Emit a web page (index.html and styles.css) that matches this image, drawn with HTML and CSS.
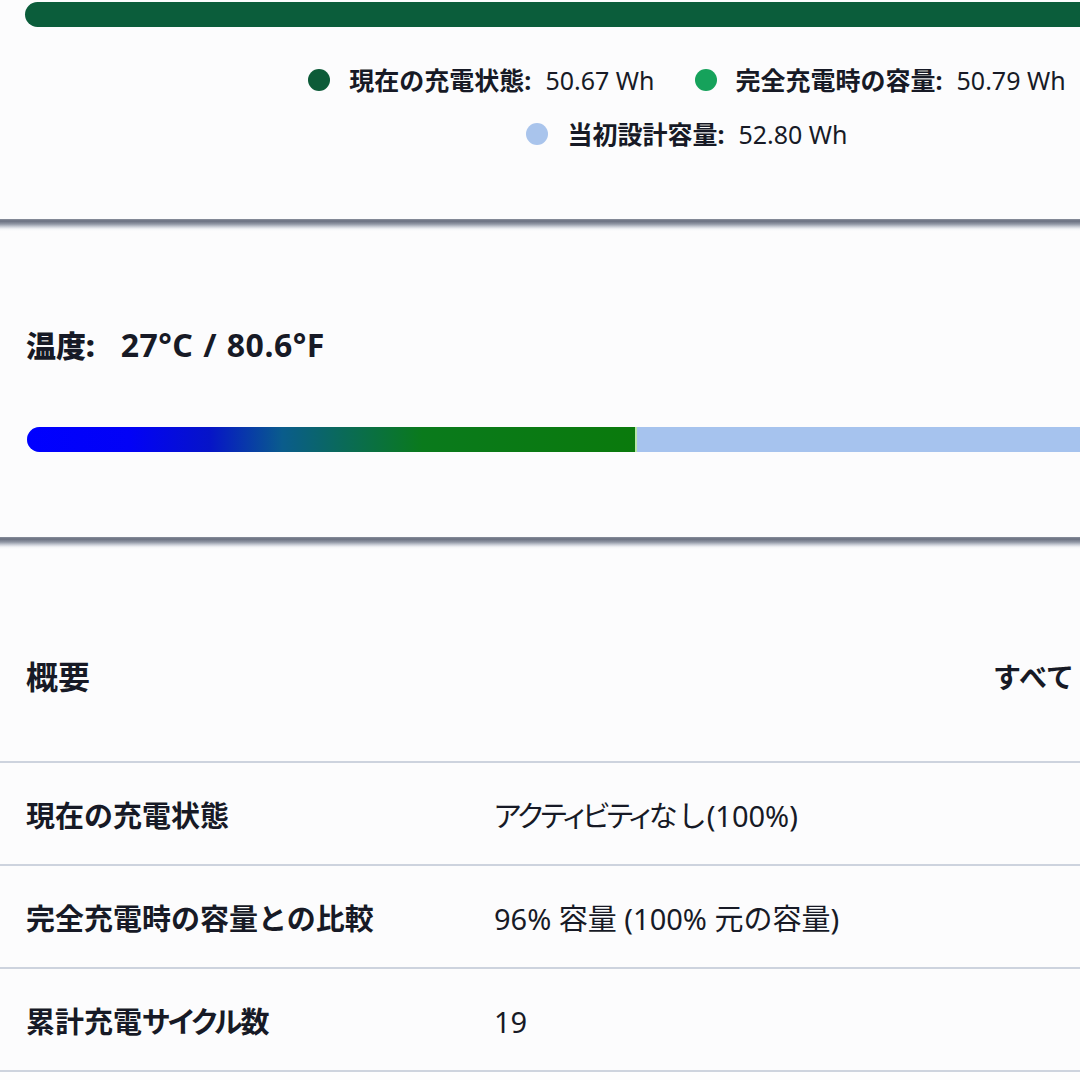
FILE: index.html
```html
<!DOCTYPE html>
<html lang="ja">
<head>
<meta charset="utf-8">
<title>バッテリー</title>
<link rel="stylesheet" href="styles.css">
</head>
<body>
<main class="page">
  <section class="card card-capacity">
    <div class="cap-bar"></div>
    <div class="legend">
      <div class="legend-row">
        <div class="legend-item"><span class="dot dot-current"></span><b>現在の充電状態:</b><span class="val">50.67 Wh</span></div>
        <div class="legend-item"><span class="dot dot-full"></span><b>完全充電時の容量:</b><span class="val">50.79 Wh</span></div>
      </div>
      <div class="legend-row">
        <div class="legend-item"><span class="dot dot-design"></span><b>当初設計容量:</b><span class="val">52.80 Wh</span></div>
      </div>
    </div>
  </section>
  <div class="divider"></div>
  <section class="card card-temp">
    <p class="temp"><b>温度:</b><span class="temp-val">27°C / 80.6°F</span></p>
    <div class="temp-bar"><div class="temp-fill" style="width:46%"></div></div>
  </section>
  <div class="divider"></div>
  <section class="card card-summary">
    <div class="summary-head">
      <h2 class="summary-title">概要</h2>
      <span class="summary-link">すべて</span>
    </div>
    <div class="row"><span class="row-label">現在の充電状態</span><span class="row-value"><span class="kana kana-tight">アクティビティ</span>なし(100%)</span></div>
    <div class="row"><span class="row-label">完全充電時の容量との比較</span><span class="row-value">96% 容量 (100% 元の容量)</span></div>
    <div class="row row-last"><span class="row-label">累計充電<span class="kana">サイクル</span>数</span><span class="row-value">19</span></div>
  </section>
</main>
</body>
</html>
```
FILE: styles.css
```css
html, body {
  margin: 0;
  padding: 0;
  overflow: hidden;
  background: #fcfcfd;
}
body {
  font-family: "Noto Sans", "Noto Sans CJK JP", sans-serif;
  color: #171a26;
}
.page {
  width: 1374px;
}
.card {
  padding: 0 26px;
  background: #fcfcfd;
}
.card-capacity {
  padding-top: 2px;
  padding-bottom: 68px;
}
.cap-bar {
  height: 25px;
  margin-left: -1px;
  border-radius: 13px;
  background: #0b5d3b;
}
.legend {
  margin-top: 36px;
  display: flex;
  flex-direction: column;
  align-items: center;
  gap: 20px;
  font-size: 25px;
  line-height: 34px;
}
.legend-row {
  display: flex;
  gap: 40px;
}
.legend-item {
  display: flex;
  align-items: center;
  white-space: nowrap;
}
.legend-item b {
  font-weight: 700;
}
.val {
  margin-left: 14px;
  font-weight: 400;
}
.dot {
  width: 22px;
  height: 22px;
  border-radius: 50%;
  margin-right: 19px;
  flex: none;
}
.dot-current { background: #0c5b38; }
.dot-full { background: #16a25b; }
.dot-design { background: #a9c4ec; }

.divider {
  height: 12px;
  background: linear-gradient(to bottom, #8a909d 0px, #6a7080 2px, #8f95a3 5px, #cfd3db 8px, #f3f4f6 10px, #fcfcfd 12px);
}

.card-temp {
  padding-top: 94px;
  padding-bottom: 85px;
}
.temp {
  margin: 0;
  font-size: 30px;
  line-height: 40px;
  font-weight: 700;
  display: flex;
  align-items: baseline;
  white-space: nowrap;
}
.temp-val {
  margin-left: 26px;
  font-size: 32px;
  letter-spacing: 0.5px;
  word-spacing: 1px;
}
.temp-bar {
  margin-top: 61px;
  margin-left: 1px;
  height: 25px;
  border-radius: 13px;
  background: #a6c3ee;
  overflow: hidden;
  display: flex;
}
.temp-fill {
  height: 100%;
  background: linear-gradient(to right, #0000ff 0%, #0202f6 17%, #0614c8 30%, #0a5c8c 42%, #0a6a58 52%, #0a7a1c 65%, #0a7a0c 100%);
  border-right: 2px solid #b6e6a8;
}

.card-summary {
  padding: 108px 0 0;
}
.summary-head {
  display: flex;
  align-items: center;
  padding: 0 26px 64px;
  white-space: nowrap;
}
.summary-title {
  margin: 0;
  flex: 0 0 967px;
  font-size: 32px;
  line-height: 40px;
  font-weight: 700;
}
.summary-link {
  font-size: 28px;
  line-height: 40px;
  font-weight: 700;
}
.row {
  display: grid;
  grid-template-columns: 468px 1fr;
  padding: 33px 26px 28px;
  border-top: 2px solid #cdd3de;
  font-size: 29px;
  line-height: 40px;
  white-space: nowrap;
}
.row-last {
  border-bottom: 2px solid #cdd3de;
}
.row-label {
  font-weight: 700;
}
.row-value {
  font-weight: 400;
}
.kana {
  font-feature-settings: "palt";
  letter-spacing: -2px;
}
.kana-tight {
  letter-spacing: -2.5px;
}
```
